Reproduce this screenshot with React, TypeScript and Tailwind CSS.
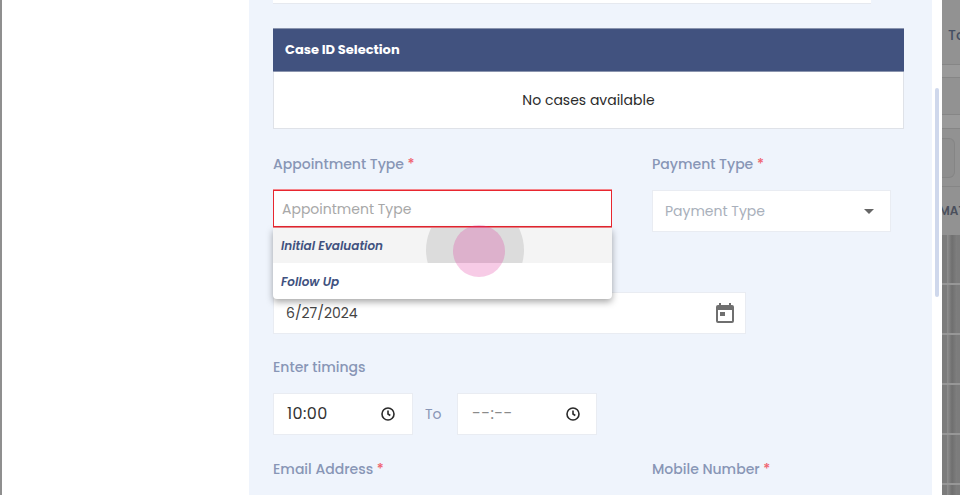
const poppins = { fontFamily: 'Poppins, Inter, "Noto Sans", sans-serif' }

function Label({ text, required }: { text: string; required?: boolean }) {
  return (
    <p className="text-[14px] leading-[21px] font-medium text-[#8896b6] whitespace-nowrap">
      {text}
      {required && <span className="text-[#f0616d]"> *</span>}
    </p>
  )
}

function ClockIcon() {
  return (
    <svg width="16" height="16" viewBox="0 0 16 16" fill="none" stroke="#2a2a2a" strokeWidth="1.6">
      <circle cx="8" cy="8" r="6" />
      <path d="M8 4.6V8l2.3 1.5" />
    </svg>
  )
}

function CalendarIcon() {
  return (
    <svg width="20" height="22" viewBox="0 0 20 22" fill="#6f6f6f">
      <path d="M4 1h2v2h8V1h2v2h1a2 2 0 0 1 2 2v14a2 2 0 0 1-2 2H3a2 2 0 0 1-2-2V5a2 2 0 0 1 2-2h1V1zm-1 7v11h14V8H3z" />
      <rect x="5" y="10" width="5" height="4" />
    </svg>
  )
}

// dimmed page peeking out on the right of the modal
function Backdrop() {
  return (
    <div className="w-[18px] shrink-0 bg-[#929292] overflow-hidden text-[#454f63] whitespace-nowrap">
      <div className="h-[65px] pt-[27px] pl-[6px] text-[14px] leading-[16px] font-medium border-b border-[#868686]">To</div>
      <div className="h-[13px] bg-[#9a9a9a] border-b border-[#868686]" />
      <div className="h-[37px] border-b border-[#868686]" />
      <div className="h-[14px] bg-[#9a9a9a] border-b border-[#868686]" />
      <div className="h-[58px] pt-[9px] border-b border-[#868686]">
        <div className="h-[40px] w-[13px] rounded-r-[6px] border border-l-0 border-[#858585] bg-[#8e8e8e]" />
      </div>
      <div className="h-[48px] pt-[16px] -ml-[3px] text-[12px] leading-[16px] font-semibold text-[#4a4f5c]">MAT</div>
      <div className="h-[260px] bg-[repeating-linear-gradient(90deg,#7c7c7c_0px,#7c7c7c_5px,#909090_5px,#6f6f6f_10px,#7f7f7f_15px)]">
        <div className="h-[50px] border-b-2 border-[#979797]" />
        <div className="h-[50px] border-b-2 border-[#979797]" />
        <div className="h-[50px] border-b-2 border-[#979797]" />
        <div className="h-[50px] border-b-2 border-[#979797]" />
        <div className="h-[50px] border-b-2 border-[#979797]" />
      </div>
    </div>
  )
}

export default function App() {
  return (
    <div className="w-[960px] h-[495px] overflow-hidden flex bg-white text-[#333]" style={poppins}>
      <div className="w-[2px] shrink-0 bg-[#8f8f8f]" />
      <div className="w-[247px] shrink-0 bg-white" />

      <main className="w-[683px] shrink-0 bg-[#eff4fc] pl-[24px] pr-[28px] overflow-hidden">
        <div className="w-[598px] h-[4px] bg-white border-b border-[#e6e9ef]" />

        <section className="mt-[24px] w-[631px]">
          <div className="h-[44px] bg-[#41527f] border-y border-[#8a94ae] flex items-center px-[12px] text-[13px] font-bold text-white">
            Case ID Selection
          </div>
          <div className="h-[57px] bg-white border border-t-0 border-[#dfe2e8] flex items-center justify-center pt-[1px] text-[14px] text-[#2b2b2b]">
            No cases available
          </div>
        </section>

        <div className="mt-[25px] flex">
          <div className="w-[379px]">
            <Label text="Appointment Type" required />
            <div className="relative mt-[15px] w-[339px]">
              <div className="h-[37px] bg-white border border-[#e8262f] shadow-[0_1px_0_#f4858b,0_-1px_0_#f4858b] flex items-center pt-[1px] px-[8px] text-[14px] text-[#a8a8a8]">
                Appointment Type
              </div>
              <div className="absolute z-10 top-[38px] left-0 w-full h-[71px] bg-white rounded-b-[4px] shadow-[0_3px_7px_rgba(0,0,0,0.35)] overflow-hidden text-[12px] font-semibold italic text-[#41527f]">
                <div className="h-[35px] bg-[#f4f4f4] flex items-center px-[8px]">Initial Evaluation</div>
                <div className="h-[36px] flex items-center pt-[2px] px-[8px]">Follow Up</div>
                <div className="absolute left-[153px] top-0 w-[98px] h-[35px] overflow-hidden">
                  <div className="-mt-[27px] w-[98px] h-[98px] rounded-full bg-[#dcdcdc]" />
                </div>
              </div>
              <div className="absolute z-20 left-[180px] top-[35px] w-[52px] h-[52px] rounded-full bg-[#e0309a]/25" />
            </div>
          </div>
          <div>
            <Label text="Payment Type" required />
            <div className="mt-[15px] w-[239px] h-[42px] bg-white border border-[#e9ecf2] flex items-center justify-between pl-[12px] pr-[16px] text-[14px] text-[#a9b0bb]">
              Payment Type
              <span className="w-0 h-0 border-x-[5px] border-x-transparent border-t-[5px] border-t-[#666]" />
            </div>
          </div>
        </div>

        <div className="mt-[60px] w-[473px] h-[42px] bg-white border border-[#e9ecf2] flex items-center justify-between pl-[12px] pr-[10px] text-[14px] text-[#444]">
          6/27/2024
          <CalendarIcon />
        </div>

        <div className="mt-[23px]">
          <Label text="Enter timings" />
        </div>
        <div className="mt-[15px] flex items-center">
          <div className="w-[140px] h-[42px] bg-white border border-[#e9ecf2] flex items-center justify-between pl-[13px] pr-[16px] text-[16px] tracking-[0.4px] text-[#333]">
            10:00
            <ClockIcon />
          </div>
          <span className="w-[44px] pl-[12px] text-[14px] text-[#8896b6]">To</span>
          <div className="w-[140px] h-[42px] bg-white border border-[#e9ecf2] flex items-center justify-between pl-[14px] pr-[15px] text-[16px] tracking-[0.4px] text-[#8a8a8a]">
            --:--
            <ClockIcon />
          </div>
        </div>

        <div className="mt-[24px] flex">
          <div className="w-[379px]">
            <Label text="Email Address" required />
          </div>
          <Label text="Mobile Number" required />
        </div>
      </main>

      {/* modal's scrollbar gutter */}
      <div className="w-[10px] shrink-0 bg-white pt-[88px] pl-[3px]">
        <div className="w-[4px] h-[209px] rounded-[2px] bg-[#cfd8ec]" />
      </div>

      <Backdrop />
    </div>
  )
}
